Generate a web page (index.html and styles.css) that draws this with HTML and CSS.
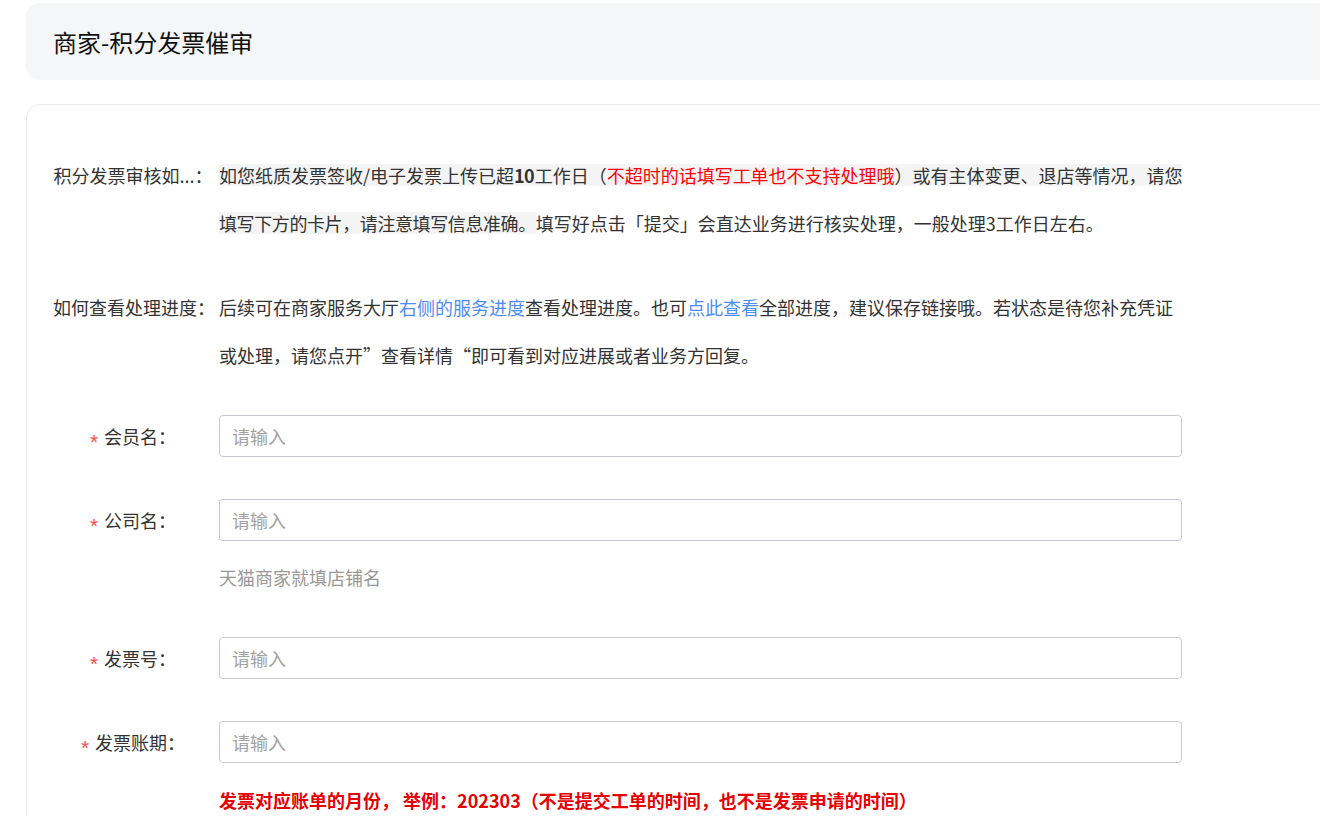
FILE: index.html
```html
<!DOCTYPE html>
<html lang="zh-CN">
<head>
<meta charset="utf-8">
<title>商家-积分发票催审</title>
<link rel="stylesheet" href="styles.css">
</head>
<body>
<div class="page">
  <header class="title-bar">
    <h1 class="title">商家-积分发票催审</h1>
  </header>
  <section class="card">
    <div class="info-row">
      <div class="label">积分发票审核如...：</div>
      <div class="content justify"><span class="mark">如您纸质发票签收/电子发票上传已超<b>10</b>工作日（<span class="red">不超时的话填写工单也不支持处理哦</span>）或有主体变更、退店等情况，请您<span class="nowrap">填写</span>下方的卡片，请注意填写信息准确。</span>填写好点击「提交」会直达业务进行核实处理，一般处理3工作日左右。</div>
    </div>
    <div class="info-row">
      <div class="label">如何查看处理进度：</div>
      <div class="content">后续可在商家服务大厅<a class="link" href="#">右侧的服务进度</a>查看处理进度。也可<a class="link" href="#">点此查看</a>全部进度，建议保存链接哦。若状态是待您补充凭证或处理，请您点开”查看详情“即可看到对应进展或者业务方回复。</div>
    </div>

    <div class="form-item">
      <label class="label form-label"><span class="req">*</span>会员名：</label>
      <div class="control"><input class="input" type="text" placeholder="请输入"></div>
    </div>
    <div class="form-item">
      <label class="label form-label"><span class="req">*</span>公司名：</label>
      <div class="control">
        <input class="input" type="text" placeholder="请输入">
        <div class="help">天猫商家就填店铺名</div>
      </div>
    </div>
    <div class="form-item">
      <label class="label form-label"><span class="req">*</span>发票号：</label>
      <div class="control"><input class="input" type="text" placeholder="请输入"></div>
    </div>
    <div class="form-item">
      <label class="label form-label"><span class="req">*</span>发票账期：</label>
      <div class="control">
        <input class="input" type="text" placeholder="请输入">
        <div class="note">发票对应账单的月份， 举例：202303（不是提交工单的时间，也不是发票申请的时间）</div>
      </div>
    </div>
  </section>
</div>
</body>
</html>
```

FILE: styles.css
```css
html, body {
  margin: 0;
  padding: 0;
  overflow: hidden;
  background: #ffffff;
}

body {
  font-family: "Noto Sans CJK SC", "Noto Sans", sans-serif;
  color: #333333;
}

.page {
  width: 1340px;
  padding: 3px 0 0 26px;
}

.title-bar {
  height: 77px;
  background: #f5f6f8;
  border-radius: 14px;
  display: flex;
  align-items: center;
  padding-left: 27px;
}

.title {
  margin: 0;
  font-size: 24px;
  font-weight: 400;
  color: #111111;
  line-height: 1;
}

.card {
  margin-top: 24px;
  border: 1px solid #ebebeb;
  border-radius: 14px;
  padding: 46px 0 60px 26px;
  background: #ffffff;
}

.info-row {
  display: flex;
  gap: 6px;
  margin-bottom: 36px;
  font-size: 18px;
  line-height: 48px;
}

.label {
  flex: 0 0 160px;
  width: 160px;
  text-align: center;
  white-space: nowrap;
  color: #333333;
  font-size: 18px;
}

.content {
  width: 963px;
  flex: 0 0 963px;
  color: #333333;
}

.justify {
  text-align: justify;
}

.nowrap {
  white-space: nowrap;
}

.mark {
  letter-spacing: -0.4px;
  background: linear-gradient(to bottom, transparent 2px, #f4f4f5 2px, #f4f4f5 24px, transparent 24px);
}

.mark b {
  font-weight: 700;
}

.red {
  color: #ff0000;
}

.link {
  color: #4d8cf5;
  text-decoration: none;
}

.form-item {
  display: flex;
  gap: 6px;
  margin-bottom: 42px;
  align-items: flex-start;
}

.form-label {
  height: 42px;
  line-height: 42px;
}

.req {
  color: #ff4d4f;
  font-family: "Liberation Sans", sans-serif;
  font-size: 21px;
  vertical-align: -5px;
  margin-right: 6px;
}

.control {
  width: 963px;
  flex: 0 0 963px;
}

.input {
  display: block;
  box-sizing: border-box;
  width: 963px;
  height: 42px;
  margin: 0;
  padding: 0 12px;
  border: 1px solid #c9c9d3;
  border-radius: 4px;
  background: #ffffff;
  font-family: "Noto Sans CJK SC", "Noto Sans", sans-serif;
  font-size: 18px;
  color: #333333;
  outline: none;
}

.input::placeholder {
  color: #a3a3a3;
}

.help {
  padding-top: 18px;
  line-height: 36px;
  font-size: 18px;
  color: #999999;
}

.note {
  padding-top: 19px;
  line-height: 36px;
  font-size: 18px;
  font-weight: 700;
  color: #e60000;
}
```
